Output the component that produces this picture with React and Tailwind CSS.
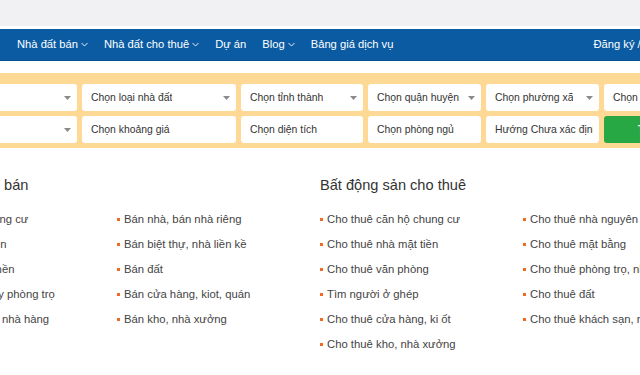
import React from "react";

const navItems = [
  { label: "Nhà đất bán", caret: true },
  { label: "Nhà đất cho thuê", caret: true },
  { label: "Dự án", caret: false },
  { label: "Blog", caret: true },
  { label: "Bảng giá dịch vụ", caret: false },
];

const row1 = [
  { w: "w-[154px]", text: "", arrow: true },
  { w: "w-[154px]", text: "Chọn loại nhà đất", arrow: true },
  { w: "w-[122px]", text: "Chọn tỉnh thành", arrow: true },
  { w: "w-[113px]", text: "Chọn quận huyện", arrow: true },
  { w: "w-[113px]", text: "Chọn phường xã", arrow: true },
  { w: "w-[113px]", text: "Chọn dự án", arrow: true },
];

const row2 = [
  { w: "w-[154px]", text: "", arrow: true },
  { w: "w-[154px]", text: "Chọn khoảng giá", arrow: false },
  { w: "w-[122px]", text: "Chọn diện tích", arrow: false },
  { w: "w-[113px]", text: "Chọn phòng ngủ", arrow: false },
  { w: "w-[113px]", text: "Hướng Chưa xác định", arrow: false },
];

const saleCol1 = [
  "Bán căn hộ chung cư",
  "Bán nhà mặt tiền",
  "Bán đất ở, đất nền",
  "Bán nhà trọ, dãy phòng trọ",
  "Bán khách sạn, nhà hàng",
];
const saleCol2 = [
  "Bán nhà, bán nhà riêng",
  "Bán biệt thự, nhà liền kề",
  "Bán đất",
  "Bán cửa hàng, kiot, quán",
  "Bán kho, nhà xưởng",
];
const rentCol1 = [
  "Cho thuê căn hộ chung cư",
  "Cho thuê nhà mặt tiền",
  "Cho thuê văn phòng",
  "Tìm người ở ghép",
  "Cho thuê cửa hàng, ki ốt",
  "Cho thuê kho, nhà xưởng",
];
const rentCol2 = [
  "Cho thuê nhà nguyên căn",
  "Cho thuê mặt bằng",
  "Cho thuê phòng trọ, nhà trọ",
  "Cho thuê đất",
  "Cho thuê khách sạn, nhà hàng",
];

function Caret() {
  return (
    <svg width="7" height="5" viewBox="0 0 7 5" className="ml-[3px] mt-[1px]">
      <polyline points="0.5,1 3.5,4 6.5,1" fill="none" stroke="white" strokeWidth="0.9" />
    </svg>
  );
}

function SelectArrow() {
  return (
    <svg width="7" height="4" viewBox="0 0 7 4" className="shrink-0">
      <polygon points="0,0 7,0 3.5,4" fill="#8a8a8a" />
    </svg>
  );
}

function Field({ item }) {
  return (
    <div
      className={`${item.w} shrink-0 h-[27px] bg-white rounded-[3px] flex items-center justify-between pl-[9px] pr-[6px]`}
    >
      <span className="whitespace-nowrap overflow-hidden text-[10.4px] text-[#333]">{item.text}</span>
      {item.arrow && <SelectArrow />}
    </div>
  );
}

function LinkList({ items }) {
  return (
    <ul className="w-[203px] shrink-0 flex flex-col">
      {items.map((t) => (
        <li key={t} className="h-[25px] flex items-center whitespace-nowrap text-[11.3px] text-[#444]">
          <span className="w-[3px] h-[3px] bg-[#f26a21] mr-[4px] shrink-0"></span>
          {t}
        </li>
      ))}
    </ul>
  );
}

export default function App() {
  return (
    <div className="w-[640px] h-[375px] overflow-hidden bg-white font-['Liberation_Sans',Arial,sans-serif]">
      <div className="h-[26px] bg-[#f1f1f3]"></div>

      <nav className="mt-[3px] h-[32px] bg-[#0b5ba3] border-b border-[#0a4f8f] flex items-center pl-[17px] text-white text-[11.2px] whitespace-nowrap">
        {navItems.map((n) => (
          <div key={n.label} className="flex items-center shrink-0 mr-[16px]">
            {n.label}
            {n.caret && <Caret />}
          </div>
        ))}
        <div className="shrink-0 ml-[184px]">Đăng ký / Đăng nhập</div>
      </nav>

      <div className="mt-[12px] h-[75px] bg-[#fed995] pt-[11px] flex flex-col gap-[5px]">
        <div className="flex gap-[5px] ml-[-77px]">
          {row1.map((f, i) => (
            <Field key={i} item={f} />
          ))}
        </div>
        <div className="flex gap-[5px] ml-[-77px]">
          {row2.map((f, i) => (
            <Field key={i} item={f} />
          ))}
          <button className="w-[113px] shrink-0 h-[27px] bg-[#28a745] rounded-[3px] text-white text-[10.4px] font-bold">
            Tìm kiếm
          </button>
        </div>
      </div>

      <div className="flex ml-[-86px] mt-[27px]">
        <section className="w-[406px] shrink-0">
          <h2 className="text-[14.6px] leading-[20px] text-[#333] whitespace-nowrap">Bất động sản bán</h2>
          <div className="flex mt-[12px]">
            <LinkList items={saleCol1} />
            <LinkList items={saleCol2} />
          </div>
        </section>
        <section className="w-[406px] shrink-0">
          <h2 className="text-[14.6px] leading-[20px] text-[#333] whitespace-nowrap">Bất động sản cho thuê</h2>
          <div className="flex mt-[12px]">
            <LinkList items={rentCol1} />
            <LinkList items={rentCol2} />
          </div>
        </section>
      </div>
    </div>
  );
}
